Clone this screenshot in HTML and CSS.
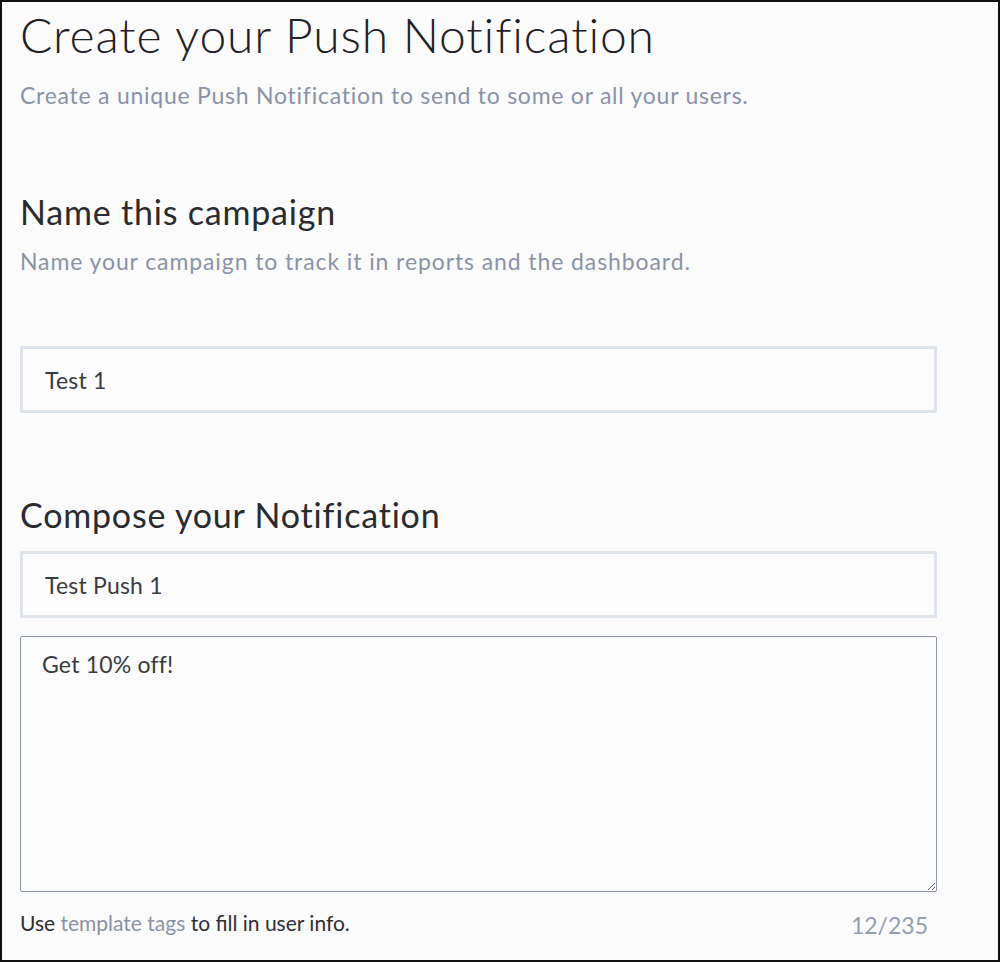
FILE: index.html
```html
<!DOCTYPE html>
<html lang="en">
<head>
<meta charset="utf-8">
<title>Create your Push Notification</title>
<link rel="stylesheet" href="styles.css">
</head>
<body>
<div class="frame">
  <main class="page">
    <h1 class="title">Create your Push Notification</h1>
    <p class="lead">Create a unique Push Notification to send to some or all your users.</p>

    <section class="section section-name">
      <h2 class="heading">Name this campaign</h2>
      <p class="lead lead-sub">Name your campaign to track it in reports and the dashboard.</p>
      <input class="field field-name" type="text" value="Test 1">
    </section>

    <section class="section section-compose">
      <h2 class="heading">Compose your Notification</h2>
      <input class="field field-title" type="text" value="Test Push 1">
      <textarea class="message">Get 10% off!</textarea>
      <div class="footer">
        <p class="hint">Use <a class="hint-link" href="#">template tags</a> to fill in user info.</p>
        <span class="counter">12/235</span>
      </div>
    </section>
  </main>
</div>
</body>
</html>
```

FILE: styles.css
```css
* { box-sizing: border-box; }

html, body {
  margin: 0;
  padding: 0;
  background: #fbfbfc;
}

.frame {
  width: 1000px;
  height: 962px;
  border: 2px solid #111;
  background: #fbfbfc;
  overflow: hidden;
}

.page {
  padding: 4px 0 0 18px;
  width: 937px;
  font-family: Lato, "Open Sans", sans-serif;
  color: #2b2c30;
}

.title {
  margin: 0;
  font-size: 48px;
  line-height: 58px;
  font-weight: 300;
  letter-spacing: 0.85px;
  color: #1f2023;
}

.lead {
  margin: 17px 0 0;
  font-size: 23px;
  line-height: 28px;
  letter-spacing: 0.75px;
  color: #8a93a6;
}

.section { display: flex; flex-direction: column; }

.section-name { margin-top: 83px; }

.heading {
  margin: 0;
  font-size: 34px;
  line-height: 40px;
  font-weight: 400;
  letter-spacing: 0.8px;
  color: #2a2b2e;
}

.lead-sub { margin-top: 15px; letter-spacing: 0.9px; }

.field {
  display: block;
  width: 917px;
  height: 67px;
  margin: 0;
  padding: 0 20px 0 22px;
  border: 3px solid #dfe3eb;
  border-radius: 1px;
  background: #fcfcfd;
  font-family: Lato, "Open Sans", sans-serif;
  font-size: 23px;
  letter-spacing: 0.2px;
  color: #3a3b3e;
  outline: none;
}

.field-name { margin-top: 71px; }

.section-compose { margin-top: 82px; }

.field-title { margin-top: 16px; }

.message {
  display: block;
  width: 917px;
  height: 256px;
  margin: 18px 0 0;
  padding: 13px 20px 0 21px;
  border: 1px solid #8d97aa;
  border-radius: 2px;
  background: #fcfcfd;
  font-family: Lato, "Open Sans", sans-serif;
  font-size: 23px;
  line-height: 28px;
  letter-spacing: 0.2px;
  color: #3a3b3e;
  outline: none;
}

.footer {
  display: flex;
  justify-content: space-between;
  align-items: flex-start;
  width: 917px;
  margin-top: 18px;
}

.hint {
  margin: 0;
  font-size: 21px;
  line-height: 26px;
  color: #2e2f33;
}

.hint-link {
  color: #8a93a6;
  text-decoration: none;
}

.counter {
  margin: 1px 9px 0 0;
  font-size: 23px;
  line-height: 28px;
  color: #959eb0;
}
```
